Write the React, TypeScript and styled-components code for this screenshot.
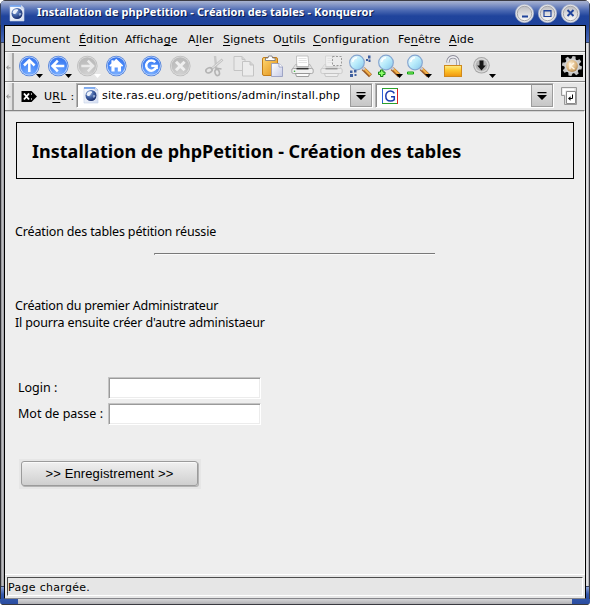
import React from "react";
import styled, { createGlobalStyle, css } from "styled-components";

const UI = `"DejaVu Sans", sans-serif`;
const PAGE = `"Noto Sans", sans-serif`;

const Global = createGlobalStyle`
  html, body { margin: 0; padding: 0; background: #fff; overflow: hidden; }
  * { box-sizing: border-box; }
`;

/* ---------- window frame ---------- */

const Window = styled.div`
  width: 590px;
  height: 605px;
  display: flex;
  flex-direction: column;
  border-radius: 6px 6px 4px 4px;
  overflow: hidden;
  background: #2c2c30;
  color: #000;
`;

const TitleBar = styled.header`
  flex: 0 0 25px;
  display: flex;
  align-items: center;
  padding: 0 9px 0 8px;
  border-top: 1px solid #3c3c44;
  border-left: 1px solid #33405f;
  border-right: 1px solid #33405f;
  background: linear-gradient(#a8b3d0 0, #8d9dc9 3px, #4f6cb4 9px, #20449c 15px, #1f439b 24px);
`;

const Title = styled.h1`
  flex: 1;
  margin: 0 0 0 12px;
  font: bold 11px/16px ${PAGE};
  letter-spacing: 0.11px;
  color: #fff;
  text-shadow: 1px 1px 0 #0a1a4a;
  white-space: nowrap;
  padding-bottom: 2px;
`;

const WindowButtons = styled.div`
  display: flex;
  gap: 4px;
`;

const Middle = styled.div`
  flex: 1;
  min-height: 0;
  display: flex;
`;

const SideFrame = styled.div<{ $right?: boolean }>`
  flex: 0 0 4px;
  display: flex;
  flex-direction: column;
  justify-content: space-between;
  background: linear-gradient(to right, #8b8b8f, #bdbdc1 50%, #9a9a9e);
  border-left: 1px solid #2e2e32;
  ${(p) =>
    p.$right &&
    css`
      border-left: 0;
      border-right: 1px solid #3c3c42;
      background: linear-gradient(to right, #d8d8da, #e2e2e4 50%, #a2a2a6);
    `}
`;

const FrameCap = styled.div<{ $h: number; $top?: boolean }>`
  height: ${(p) => p.$h}px;
  background: ${(p) => (p.$top ? "linear-gradient(#20449c, #4a69b6)" : "linear-gradient(#8fa3d4, #3558ab 60%, #2a4da4)")};
  border-${(p) => (p.$top ? "bottom" : "top")}: 1px solid #33405f;
`;

const Client = styled.main`
  flex: 1;
  min-width: 0;
  display: flex;
  flex-direction: column;
  border: 1px solid #000;
  border-bottom-color: #85858a;
  background: #e6e6e6;
`;

const BottomFrame = styled.div`
  flex: 0 0 6px;
  display: flex;
  justify-content: space-between;
  background: linear-gradient(#d6d6d8, #b2b2b5);
  border-bottom: 1px solid #3a3a40;
`;

const Corner = styled.div`
  width: 18px;
  background: linear-gradient(#3155a8, #2a4ca0);
`;

/* ---------- bars ---------- */

const MenuBar = styled.nav`
  flex: 0 0 25px;
  display: flex;
  align-items: center;
  padding-left: 7px;
  font: 11px/15px ${UI};
`;

const MenuItem = styled.span<{ $w: number }>`
  flex: 0 0 ${(p) => p.$w}px;
  letter-spacing: 0.14px;
  white-space: nowrap;
  padding-top: 2px;
`;

const Key = styled.span`
  text-decoration: underline;
  text-underline-offset: 2px;
  text-decoration-thickness: 1px;
  text-decoration-skip-ink: none;
`;

const Bar = styled.div<{ $h: number }>`
  flex: 0 0 ${(p) => p.$h}px;
  display: flex;
  align-items: stretch;
  border-top: 1px solid #858585;
  box-shadow: inset 0 1px 0 #f8f8f8;
`;

const Handle = styled.div`
  flex: 0 0 9px;
  display: flex;
  align-items: center;
  justify-content: center;
  margin-top: 1px;
  background: linear-gradient(to right, #f4f4f4, #dcdcdc);
  border-right: 2px solid #a6a6a6;
`;

const IconGroup = styled.div`
  display: flex;
  margin-right: 6px;
  align-items: flex-start;
`;

const Spacer = styled.div`
  flex: 1;
`;

const GearBox = styled.div`
  width: 22px;
  height: 22px;
  margin: 3px 2px 0 0;
`;

const UrlLabel = styled.label`
  width: 32px;
  margin-left: 6px;
  align-self: center;
  font: 11px/15px ${UI};
  letter-spacing: 0.3px;
  white-space: nowrap;
`;

const ClearIcon = styled.div`
  align-self: center;
  display: flex;
  width: 17px;
  margin-left: 7px;
  padding-top: 1px;
`;

const Combo = styled.div<{ $w: number }>`
  flex: 0 0 ${(p) => p.$w}px;
  height: 25px;
  margin-top: 1px;
  margin-right: 2px;
  display: flex;
  align-items: stretch;
  background: #fff;
  border: 1px solid #b4b4b4;
  border-right-color: #fff;
  border-bottom-color: #fff;
  box-shadow: inset 1px 1px 0 #8c8c8c;
`;

const ComboText = styled.div`
  flex: 1;
  display: flex;
  align-items: center;
  gap: 3px;
  padding-left: 6px;
  font: 11px/15px ${UI};
  letter-spacing: 0.19px;
  white-space: nowrap;
`;

const DropButton = styled.div`
  flex: 0 0 22px;
  display: flex;
  align-items: center;
  justify-content: center;
  background: linear-gradient(#e4e4e4, #c6c6c6);
  border: 1px solid #9c9c9c;
  border-top-color: #888;
`;

const GoIcon = styled.div`
  display: flex;
  align-self: center;
  margin-left: 5px;
`;

/* ---------- web page ---------- */

const Page = styled.section`
  flex: 1;
  min-height: 0;
  display: flex;
  flex-direction: column;
  border-top: 1px solid #858585;
  border-bottom: 1px solid #fff;
  border-right: 1px solid #fafafa;
  box-shadow: inset 0 1px 0 #d4d4d4;
  background: #eee;
  padding: 11px 10px 0 11px;
  font: 12.5px/17px ${PAGE};
  letter-spacing: -0.15px;
`;

const Banner = styled.h2`
  flex: 0 0 57px;
  display: flex;
  align-items: center;
  margin: 0;
  padding: 0 0 0 15px;
  border: 1px solid #000;
  font: bold 18px/24px ${PAGE};
  letter-spacing: 0.01px;
  white-space: nowrap;
`;

const Line = styled.p<{ $mt?: number; $ls?: number }>`
  margin: ${(p) => p.$mt ?? 0}px 0 0 -1px;
  letter-spacing: ${(p) => p.$ls ?? -0.15}px;
  white-space: nowrap;
`;

const Rule = styled.hr`
  flex: 0 0 2px;
  width: 281px;
  margin: 13px 0 0 138px;
  border: 0;
  border-top: 1px solid #787878;
  border-left: 1px solid #9a9a9a;
  background: #fafafa;
`;

const Form = styled.form`
  display: grid;
  grid-template-columns: 90px 153px;
  grid-auto-rows: 22px;
  row-gap: 4px;
  align-items: center;
  margin: 46px 0 0 2px;
  letter-spacing: 0;
`;

const FieldLabel = styled.label`
  padding-bottom: 2px;
`;

const Field = styled.input`
  width: 153px;
  height: 22px;
  border: 1px solid #c4c4c4;
  border-right-color: #fff;
  border-bottom-color: #fff;
  border-radius: 0;
  outline: 0;
  background: #fff;
  box-shadow: inset 1px 1px 0 #9a9a9a, inset -1px -1px 0 #ececec;
`;

const ButtonHalo = styled.div`
  width: 182px;
  height: 30px;
  margin: 34px 0 0 3px;
  padding: 2px;
  background: #e6e6e6;
`;

const Submit = styled.button`
  display: block;
  width: 177px;
  height: 25px;
  padding: 0;
  border: 1px solid #9b9b9b;
  border-radius: 3px;
  background: linear-gradient(#f0f0f0, #cfcfcf);
  box-shadow: inset 0 1px 0 #fafafa, 1px 1px 0 #b4b4b4;
  font: 13px/15px "Liberation Sans", sans-serif;
  letter-spacing: 0.11px;
  color: #000;
`;

const StatusBar = styled.footer`
  flex: 0 0 23px;
  padding: 2px;
`;

const StatusText = styled.div`
  height: 19px;
  padding: 2px 0 0 0;
  border: 1px solid #4c4c4c;
  border-right-color: #fff;
  border-bottom-color: #fff;
  font: 11px/15px ${UI};
  letter-spacing: 0.3px;
`;

const Svg = styled.svg`
  display: block;
  flex: none;
`;

/* ---------- drawings ---------- */

const GlobeDoc = () => (
  <Svg width="16" height="17" viewBox="0 0 16 17">
    <defs>
      <radialGradient id="globe" cx=".35" cy=".3" r=".8">
        <stop offset="0" stopColor="#a9bfe6" />
        <stop offset=".45" stopColor="#4465a8" />
        <stop offset="1" stopColor="#0c2060" />
      </radialGradient>
      <linearGradient id="sheet" x1="0" y1="0" x2="1" y2="1">
        <stop offset="0" stopColor="#ffffff" />
        <stop offset="1" stopColor="#d3dcf0" />
      </linearGradient>
    </defs>
    <path d="M1 .5h11.5L15 3v13H1z" fill="url(#sheet)" stroke="#c4d0e8" strokeWidth=".6" />
    <path d="M1 .3h11v1.5H1z" fill="#5f97ec" />
    <path d="M12 .5V3h3z" fill="#fff" stroke="#8da7d6" strokeWidth=".5" />
    <circle cx="8" cy="8.500" r="5.500" fill="url(#globe)" />
    <path d="M3.500 7.500C4.300 4.600 7.500 3.600 9 4.800c.6 1.200-1 1.300-1.500 2.700-.5 1.300-2.500 2.700-4 0z" fill="#eaf0fa" />
    <path d="M10 8.300c1-.9 2.600-.2 2.400.8-.3 1.300-1.600 2-2.100 1.600-.5-.6-.8-1.700-.3-2.400z" fill="#8fa6cf" />
  </Svg>
);

const WinButton = ({ kind }: { kind: "min" | "max" | "close" }) => (
  <Svg width="19" height="19" viewBox="0 0 19 19">
    <defs>
      <linearGradient id="knob" x1="0" y1="0" x2="0" y2="1">
        <stop offset="0" stopColor="#bcbcc0" />
        <stop offset="1" stopColor="#fafafa" />
      </linearGradient>
    </defs>
    <circle cx="9.5" cy="9.5" r="9.2" fill="#e0e1e5" stroke="#a3acc6" strokeWidth=".6" />
    <circle cx="9.5" cy="9.5" r="7.2" fill="url(#knob)" stroke="#a6a6aa" />
    {kind === "min" && <path d="M7 12.500h6" stroke="#1f439b" strokeWidth="2" />}
    {kind === "max" && <path d="M6 6.500h7v6H6zM5.500 7h8" fill="none" stroke="#1f439b" strokeWidth="1.2" />}
    {kind === "close" && <path d="M6.500 6l6 6M12.500 6l-6 6" stroke="#1f439b" strokeWidth="1.900" />}
  </Svg>
);

const Grip = () => (
  <Svg width="5" height="5" viewBox="0 0 5 5">
    <path d="M0 2.500L2.500 0v5z" fill="#9a9a9a" />
    <path d="M2.500 2h2v1.500h-2z" fill="#a8a8a8" />
  </Svg>
);

const Slot = ({ children, drop, faded }: { children: React.ReactNode; drop?: boolean; faded?: boolean }) => (
  <Svg width="29" height="28" viewBox="0 0 29 28">
    {children}
    {drop && <path d="M22 22h7L25.500 26z" fill={faded ? "#fff" : "#000"} />}
  </Svg>
);

const Disc = ({ off }: { off?: boolean }) => (
  <>
    <defs>
      <radialGradient id={off ? "discOff" : "discOn"} cx=".5" cy="1" r=".95">
        <stop offset="0" stopColor={off ? "#d2d2d2" : "#7db0ff"} />
        <stop offset=".6" stopColor={off ? "#c2c2c2" : "#4d8dfa"} />
        <stop offset="1" stopColor={off ? "#bababa" : "#3a78ee"} />
      </radialGradient>
    </defs>
    <circle cx="15.300" cy="14" r="10.300" fill={off ? "#bcbcbc" : "#4f7fd8"} />
    <circle cx="15.300" cy="14" r="9.500" fill={off ? "#dcdcdc" : "#c3d9fc"} />
    <circle cx="15.300" cy="14" r="8.700" fill={`url(#${off ? "discOff" : "discOn"})`} />
  </>
);

const Arrow = ({ turn, off }: { turn: number; off?: boolean }) => (
  <>
    <Disc off={off} />
    <path
      d="M15.300 7.500v12.500M10 13.500l5.300-5.300 5.300 5.300"
      fill="none"
      stroke={off ? "#eaeaea" : "#fff"}
      strokeWidth="2.500"
      transform={`rotate(${turn} 15.300 14)`}
    />
  </>
);

const Home = () => (
  <>
    <Disc />
    <path d="M15.200 6.800l7 6.700-1.200 1.300-1-.8v5.600h-3.200v-4h-3.200v4h-3.200V14l-1 .8-1.200-1.300 2.200-2V8.200h2.200v1.200z" fill="#fff" />
  </>
);

const Reload = () => (
  <>
    <Disc />
    <path d="M19.200 10.300A5.100 5.100 0 1 0 20 15.500" fill="none" stroke="#fff" strokeWidth="2.500" />
    <path d="M15.300 12.800h6.600V17h-2.700v-1.900h-3.900z" fill="#fff" />
  </>
);

const Stop = () => (
  <>
    <Disc off />
    <path d="M11 9.700l8.600 8.600M19.600 9.700L11 18.300" stroke="#efefef" strokeWidth="3" />
  </>
);

const Scissors = () => (
  <g fill="none" stroke="#b4b4b4">
    <path d="M15 4l1.200 12" stroke="#c8c8c8" strokeWidth="2.400" />
    <path d="M22.500 7.500L11 17.500" strokeWidth="2.600" stroke="#c2c2c2" />
    <path d="M22 8L12 16.300" stroke="#e6e6e6" strokeWidth="1" />
    <ellipse cx="9" cy="18.300" rx="3.300" ry="2.400" transform="rotate(-25 9 18.300)" strokeWidth="1.600" />
    <ellipse cx="17.200" cy="20.500" rx="2.200" ry="3.100" transform="rotate(-15 17.200 20.500)" strokeWidth="1.600" />
    <path d="M15 16l6.500 1" strokeWidth="1.400" />
  </g>
);

const Copy = () => (
  <g fill="#e8e8e8" stroke="#c4c4c4">
    <path d="M5 4.500h8l3 3v11H5z" />
    <path d="M13 4.500v3h3" fill="#d4d4d4" />
    <path d="M13.500 9.500h7.500l3.500 3.500v11h-11z" fill="#ececec" />
    <path d="M21 9.500V13h3.500" fill="#d2d2d2" />
  </g>
);

const Paste = () => (
  <>
    <defs>
      <linearGradient id="board" x1="0" y1="0" x2="1" y2="1">
        <stop offset="0" stopColor="#ffd873" />
        <stop offset="1" stopColor="#e08e14" />
      </linearGradient>
      <linearGradient id="paper" x1="0" y1="0" x2="1" y2="1">
        <stop offset="0" stopColor="#fff" />
        <stop offset="1" stopColor="#c6cbe6" />
      </linearGradient>
    </defs>
    <rect x="4.500" y="5.500" width="15" height="18" rx="1.500" fill="url(#board)" stroke="#c47d18" />
    <path d="M7.500 8.500V6h2.500l.6-2h3.400l.6 2h2.500v2.500z" fill="#fff" stroke="#6e6e78" strokeWidth=".8" />
    <path d="M13.500 11.500h7.500l3.500 3.500v9.500h-11z" fill="url(#paper)" stroke="#8f97bc" strokeWidth=".8" />
    <path d="M21 11.500V15h3.500" fill="#fff" stroke="#8f97bc" strokeWidth=".8" />
  </>
);

const Printer = ({ frame }: { frame?: boolean }) => (
  <g opacity={frame ? 0.42 : 1}>
    <path d="M9.500 4h11.500l1 10.500h-12.300z" fill="#fff" stroke="#b5b5b5" strokeWidth=".8" />
    <path d="M11.500 6.500h8M11.500 8.500h8.300M11.500 10.500h8.500" stroke="#dcdcdc" strokeWidth=".8" />
    <path d="M8.500 12.500h1.200v2.500h12v-2.500H23l2.800 5H5z" fill="#e2e2e2" stroke="#aaa" strokeWidth=".7" />
    <rect x="4.800" y="16.500" width="21.400" height="5" rx="1.500" fill="#f0f0f0" stroke="#999" strokeWidth=".8" />
    <path d="M9.500 16.700h12" stroke="#333" strokeWidth="1.500" />
    <path d="M8.500 21.500h14l-1 3H9.500z" fill="#fafafa" stroke="#888" strokeWidth=".8" />
    {!frame && <circle cx="7.500" cy="19.300" r=".8" fill="#3cae3c" />}
    {frame && <rect x="16.500" y="4.500" width="9" height="9" fill="#f2f2f2" stroke="#333" strokeDasharray="2 1.500" />}
  </g>
);

const Lens = ({ id, children }: { id: string; children?: React.ReactNode }) => (
  <>
    <defs>
      <linearGradient id={id} x1="0" y1="0" x2="1" y2="1">
        <stop offset="0" stopColor="#fff" />
        <stop offset=".5" stopColor="#b9ecfb" />
        <stop offset="1" stopColor="#86c4ea" />
      </linearGradient>
    </defs>
    <path d="M18 16.500l7.500 7.300" stroke="#9a5a24" strokeWidth="4.200" />
    <path d="M18.500 16l7 7" stroke="#f3b14a" strokeWidth="2.300" />
    <path d="M16.500 14.500l3 3" stroke="#c8c8d0" strokeWidth="2.800" />
    <circle cx="12" cy="10.500" r="7.300" fill={`url(#${id})`} stroke="#86a6d0" strokeWidth="1.200" />
    <path d="M7.700 10a4.800 4.800 0 0 1 4.300-4.300" fill="none" stroke="#fff" strokeWidth="1.400" />
    {children}
  </>
);

const FindDots = () => (
  <path
    d="M5 18.500h2.500v2.500H5zM9 18h2.500v2.500H9zM5 22h3v3H5zM9.500 22h2v2h-2zM23 3.500h2.500v3H23zM21 7h2v2h-2zM23.500 7.500h2V10h-2z"
    fill="#3f5f9f"
  />
);

const Padlock = () => (
  <>
    <defs>
      <linearGradient id="brass" x1="0" y1="0" x2="0" y2="1">
        <stop offset="0" stopColor="#fff08a" />
        <stop offset=".45" stopColor="#fdc62c" />
        <stop offset="1" stopColor="#f0940c" />
      </linearGradient>
    </defs>
    <path d="M10 10.500V9.800a5 5 0 0 1 10 0V14" fill="none" stroke="#8c8c98" strokeWidth="3.400" />
    <path d="M10 10.500V9.800a5 5 0 0 1 10 0V14" fill="none" stroke="#f0f0f4" strokeWidth="1.800" />
    <rect x="6.500" y="13.500" width="17" height="11" fill="url(#brass)" stroke="#d08a1c" />
  </>
);

const Download = () => (
  <>
    <circle cx="14.500" cy="13.300" r="8.300" fill="#a8a8a8" />
    <circle cx="14.500" cy="13.300" r="7.200" fill="#dadada" />
    <circle cx="14.500" cy="13.300" r="5.900" fill="#b4b4b4" />
    <path d="M12.500 8.500h4v5h2.300l-4.300 5-4.300-5h2.300z" fill="#161616" />
  </>
);

const Gear = () => (
  <Svg width="22" height="22" viewBox="0 0 22 22">
    <defs>
      <radialGradient id="core" cx=".4" cy=".35" r=".8">
        <stop offset="0" stopColor="#fff0d4" />
        <stop offset=".6" stopColor="#d8b078" />
        <stop offset="1" stopColor="#96703e" />
      </radialGradient>
    </defs>
    <path d="M0 0h22v22H0z" fill="#000" />
    {[0, 45, 90, 135, 180, 225, 270, 315].map((a) => (
      <path key={a} d="M8.600 5l.9-4h3l.9 4z" fill="#c4c4c4" transform={`rotate(${a + 12} 11 11)`} />
    ))}
    <circle cx="11" cy="11" r="7.600" fill="#d0d0d0" />
    <circle cx="11" cy="11" r="5.900" fill="url(#core)" />
    <path d="M9 7.800v6.400M13 8l-3.500 3 4 3.300" fill="none" stroke="#fff6e6" strokeWidth="1.400" />
  </Svg>
);

const Eraser = () => (
  <Svg width="17" height="11" viewBox="0 0 17 11">
    <path d="M.5 0h10l5.500 5.500L10.500 11H.5z" fill="#000" />
    <path d="M3 2.500l5 6M8 2.500l-5 6" stroke="#fff" strokeWidth="1.900" />
    <path d="M10.500 2v2M10.500 7v2" stroke="#999" />
  </Svg>
);

const DropGlyph = () => (
  <Svg width="10" height="8" viewBox="0 0 10 8">
    <path d="M.5 0h9v1.200h-9zM0 3h10L5 8z" fill="#000" />
  </Svg>
);

const Google = () => (
  <Svg width="16" height="16" viewBox="0 0 16 16">
    <path d="M0 0h16v16H0z" fill="#fff" />
    <path d="M.5 0v16" stroke="#2a62d8" />
    <path d="M0 .5h16M0 15.500h16" stroke="#2ca02c" />
    <path d="M15.500 1v15" stroke="#d22" />
    <path d="M12.300 5.400C11.500 3.700 10.200 3 8.500 3 5.500 3 3.800 5.200 3.800 8s1.700 5 4.700 5c1.700 0 3-.6 3.800-1.400V8.700H9" fill="none" stroke="#1c3cb0" strokeWidth="1.500" />
  </Svg>
);

const GoDoc = () => (
  <Svg width="16" height="18" viewBox="0 0 16 18">
    <path d="M.5.500h15v17H3.500V8.500h-3z" fill="#dcdcdc" stroke="#999" />
    <path d="M1.500 1.500h12v2h-9v4h-3z" fill="#fff" />
    <path d="M5.500 4.500h9v12h-9z" fill="#fff" stroke="#8a8a8a" />
    <path d="M11.500 7.500v4H8.500" fill="none" stroke="#000" />
    <path d="M9.500 9.200v4.600L7 11.500z" fill="#000" />
  </Svg>
);

/* ---------- data ---------- */

const menu: [string, string, string, number][] = [
  ["", "D", "ocument", 67],
  ["", "É", "dition", 46],
  ["Afficha", "g", "e", 63],
  ["A", "l", "ler", 35],
  ["", "S", "ignets", 50],
  ["O", "u", "tils", 40],
  ["", "C", "onfiguration", 85],
  ["Fe", "n", "être", 51],
  ["", "A", "ide", 40],
];

export default function App() {
  return (
    <>
      <Global />
      <Window>
        <TitleBar>
          <GlobeDoc />
          <Title>Installation de phpPetition - Création des tables - Konqueror</Title>
          <WindowButtons>
            <WinButton kind="min" />
            <WinButton kind="max" />
            <WinButton kind="close" />
          </WindowButtons>
        </TitleBar>
        <Middle>
          <SideFrame>
            <FrameCap $h={18} $top />
            <FrameCap $h={13} />
          </SideFrame>
          <Client>
            <MenuBar>
              {menu.map(([before, key, after, w]) => (
                <MenuItem key={before + key + after} $w={w}>
                  {before}
                  <Key>{key}</Key>
                  {after}
                </MenuItem>
              ))}
            </MenuBar>
            <Bar $h={30}>
              <Handle>
                <Grip />
              </Handle>
              <IconGroup>
                <Slot drop><Arrow turn={0} /></Slot>
                <Slot drop><Arrow turn={-90} /></Slot>
                <Slot drop faded><Arrow turn={90} off /></Slot>
                <Slot><Home /></Slot>
              </IconGroup>
              <IconGroup>
                <Slot><Reload /></Slot>
                <Slot><Stop /></Slot>
              </IconGroup>
              <IconGroup>
                <Slot><Scissors /></Slot>
                <Slot><Copy /></Slot>
                <Slot><Paste /></Slot>
                <Slot><Printer /></Slot>
                <Slot><Printer frame /></Slot>
                <Slot><Lens id="lensA"><FindDots /></Lens></Slot>
                <Slot drop>
                  <Lens id="lensB">
                    <path d="M4.500 20h2v-2h2.500v2h2v2.500h-2v2H6.500v-2h-2z" fill="#8dff6a" stroke="#128012" />
                  </Lens>
                </Slot>
                <Slot drop>
                  <Lens id="lensC">
                    <path d="M4.500 20h6v2h-6z" fill="#8dff6a" stroke="#12a012" />
                  </Lens>
                </Slot>
              </IconGroup>
              <IconGroup>
                <Slot><Padlock /></Slot>
                <Slot drop><Download /></Slot>
              </IconGroup>
              <Spacer />
              <GearBox>
                <Gear />
              </GearBox>
            </Bar>
            <Bar $h={29}>
              <Handle>
                <Grip />
              </Handle>
              <ClearIcon>
                <Eraser />
              </ClearIcon>
              <UrlLabel>
                U<Key>R</Key>L :
              </UrlLabel>
              <Combo $w={297}>
                <ComboText>
                  <GlobeDoc />
                  site.ras.eu.org/petitions/admin/install.php
                </ComboText>
                <DropButton>
                  <DropGlyph />
                </DropButton>
              </Combo>
              <Combo $w={179}>
                <ComboText>
                  <Google />
                </ComboText>
                <DropButton>
                  <DropGlyph />
                </DropButton>
              </Combo>
              <GoIcon>
                <GoDoc />
              </GoIcon>
            </Bar>
            <Page>
              <Banner>Installation de phpPetition - Création des tables</Banner>
              <Line $mt={44}>Création des tables pétition réussie</Line>
              <Rule />
              <Line $mt={42} $ls={-0.21}>Création du premier Administrateur</Line>
              <Line>Il pourra ensuite créer d'autre administaeur</Line>
              <Form>
                <FieldLabel htmlFor="login">Login :</FieldLabel>
                <Field id="login" />
                <FieldLabel htmlFor="password">Mot de passe :</FieldLabel>
                <Field id="password" type="password" />
              </Form>
              <ButtonHalo>
                <Submit type="button">&gt;&gt; Enregistrement &gt;&gt;</Submit>
              </ButtonHalo>
            </Page>
            <StatusBar>
              <StatusText>Page chargée.</StatusText>
            </StatusBar>
          </Client>
          <SideFrame $right>
            <FrameCap $h={18} $top />
            <FrameCap $h={13} />
          </SideFrame>
        </Middle>
        <BottomFrame>
          <Corner />
          <Corner />
        </BottomFrame>
      </Window>
    </>
  );
}
